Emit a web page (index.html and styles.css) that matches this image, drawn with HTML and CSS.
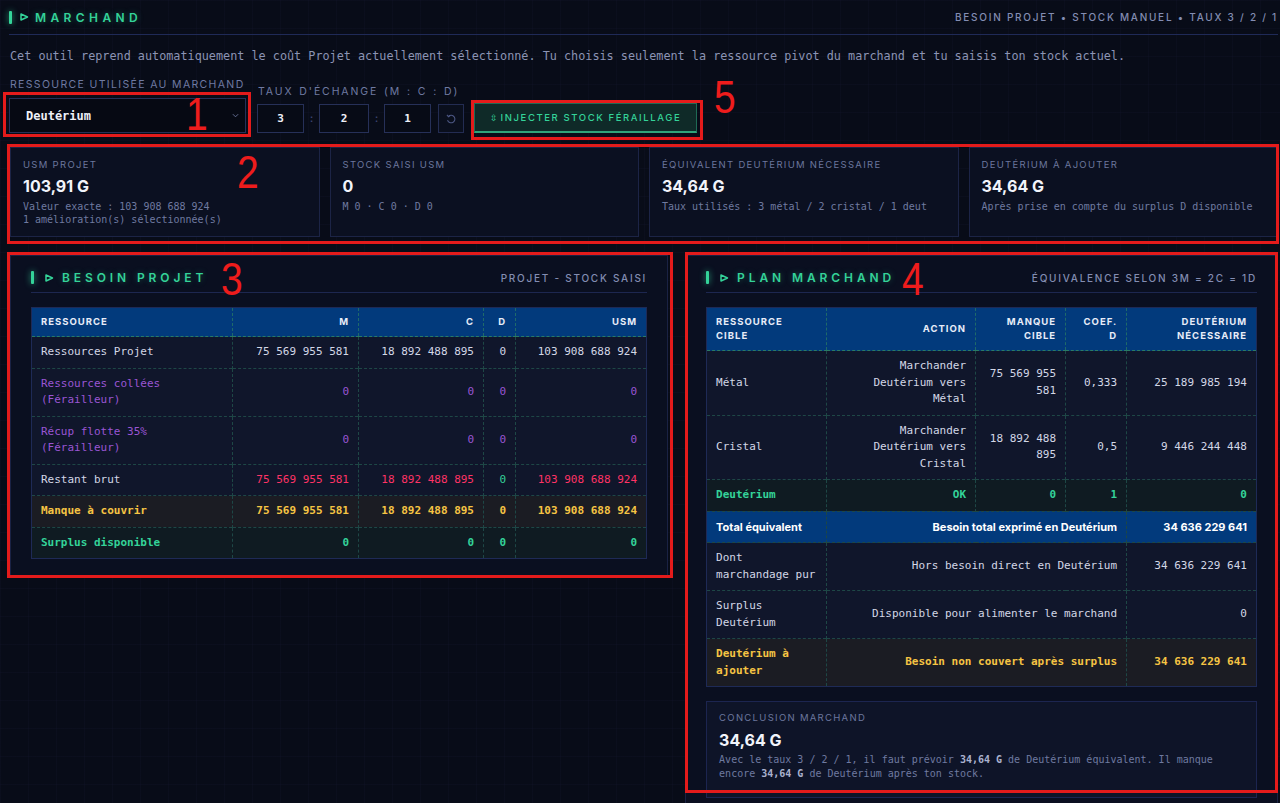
FILE: index.html
```html
<!DOCTYPE html>
<html lang="fr">
<head>
<meta charset="utf-8">
<title>Marchand</title>
<link rel="stylesheet" href="styles.css">
</head>
<body>
<main class="page">
  <header class="sec-head">
    <div class="title main-title">
      <span class="bar"></span>
      <svg class="tri" viewBox="0 0 10 10"><path d="M2 2 L8.5 5 L2 8 Z" fill="none" stroke="currentColor" stroke-width="1.5" stroke-linejoin="round"/></svg>
      <h1>MARCHAND</h1>
    </div>
    <div class="meta">BESOIN PROJET • STOCK MANUEL • TAUX 3 / 2 / 1</div>
  </header>

  <p class="desc">Cet outil reprend automatiquement le coût Projet actuellement sélectionné. Tu choisis seulement la ressource pivot du marchand et tu saisis ton stock actuel.</p>

  <div class="controls">
    <div class="field">
      <div class="lbl">RESSOURCE UTILISÉE AU MARCHAND</div>
      <div class="select">
        <span>Deutérium</span>
        <svg class="chev" viewBox="0 0 8 5"><path d="M1 1 L4 4 L7 1" fill="none" stroke="currentColor" stroke-width="1"/></svg>
      </div>
    </div>
    <div class="field">
      <div class="lbl lbl-taux">TAUX D'ÉCHANGE (M : C : D)</div>
      <div class="rates">
        <div class="num">3</div><span class="colon">:</span>
        <div class="num">2</div><span class="colon">:</span>
        <div class="num">1</div>
        <div class="reset">
          <svg viewBox="0 0 16 16"><path d="M4.6 4.6 A5 5 0 1 1 3.4 9.5" fill="none" stroke="currentColor" stroke-width="1.4"/><path d="M2.6 2.6 L4.6 5 L7 3.4" fill="none" stroke="currentColor" stroke-width="1.4"/></svg>
        </div>
      </div>
    </div>
    <div class="inject"><span class="updown">⇳</span> INJECTER STOCK FÉRAILLAGE</div>
  </div>

  <section class="cards">
    <div class="card">
      <div class="card-lbl">USM PROJET</div>
      <div class="card-val">103,91 G</div>
      <div class="card-sub">Valeur exacte : 103 908 688 924</div>
      <div class="card-sub">1 amélioration(s) sélectionnée(s)</div>
    </div>
    <div class="card">
      <div class="card-lbl">STOCK SAISI USM</div>
      <div class="card-val">0</div>
      <div class="card-sub">M 0 · C 0 · D 0</div>
    </div>
    <div class="card">
      <div class="card-lbl">ÉQUIVALENT DEUTÉRIUM NÉCESSAIRE</div>
      <div class="card-val">34,64 G</div>
      <div class="card-sub">Taux utilisés : 3 métal / 2 cristal / 1 deut</div>
    </div>
    <div class="card">
      <div class="card-lbl">DEUTÉRIUM À AJOUTER</div>
      <div class="card-val">34,64 G</div>
      <div class="card-sub">Après prise en compte du surplus D disponible</div>
    </div>
  </section>

  <section class="panels">
    <div class="panel">
      <header class="panel-head">
        <div class="title">
          <span class="bar"></span>
          <svg class="tri" viewBox="0 0 10 10"><path d="M2 2 L8.5 5 L2 8 Z" fill="none" stroke="currentColor" stroke-width="1.5" stroke-linejoin="round"/></svg>
          <h2>BESOIN PROJET</h2>
        </div>
        <div class="meta">PROJET - STOCK SAISI</div>
      </header>
      <table class="grid besoin">
        <colgroup><col class="b1"><col class="b2"><col class="b3"><col class="b4"><col class="b5"></colgroup>
        <thead>
          <tr><th class="l">RESSOURCE</th><th>M</th><th>C</th><th>D</th><th>USM</th></tr>
        </thead>
        <tbody>
          <tr><td class="l">Ressources Projet</td><td>75 569 955 581</td><td>18 892 488 895</td><td>0</td><td>103 908 688 924</td></tr>
          <tr class="purple"><td class="l">Ressources collées (Férailleur)</td><td>0</td><td>0</td><td>0</td><td>0</td></tr>
          <tr class="purple"><td class="l">Récup flotte 35% (Férailleur)</td><td>0</td><td>0</td><td>0</td><td>0</td></tr>
          <tr><td class="l">Restant brut</td><td class="red">75 569 955 581</td><td class="red">18 892 488 895</td><td class="green">0</td><td class="red">103 908 688 924</td></tr>
          <tr class="warn"><td class="l">Manque à couvrir</td><td>75 569 955 581</td><td>18 892 488 895</td><td>0</td><td>103 908 688 924</td></tr>
          <tr class="ok"><td class="l">Surplus disponible</td><td>0</td><td>0</td><td>0</td><td>0</td></tr>
        </tbody>
      </table>
    </div>

    <div class="panel">
      <header class="panel-head">
        <div class="title">
          <span class="bar"></span>
          <svg class="tri" viewBox="0 0 10 10"><path d="M2 2 L8.5 5 L2 8 Z" fill="none" stroke="currentColor" stroke-width="1.5" stroke-linejoin="round"/></svg>
          <h2>PLAN MARCHAND</h2>
        </div>
        <div class="meta">ÉQUIVALENCE SELON 3M = 2C = 1D</div>
      </header>
      <table class="grid plan">
        <colgroup><col class="p1"><col class="p2"><col class="p3"><col class="p4"><col class="p5"></colgroup>
        <thead>
          <tr><th class="l">RESSOURCE<br>CIBLE</th><th>ACTION</th><th>MANQUE<br>CIBLE</th><th>COEF.<br>D</th><th>DEUTÉRIUM<br>NÉCESSAIRE</th></tr>
        </thead>
        <tbody>
          <tr><td class="l">Métal</td><td>Marchander Deutérium vers Métal</td><td>75 569 955 581</td><td>0,333</td><td>25 189 985 194</td></tr>
          <tr><td class="l">Cristal</td><td>Marchander Deutérium vers Cristal</td><td>18 892 488 895</td><td>0,5</td><td>9 446 244 448</td></tr>
          <tr class="ok"><td class="l">Deutérium</td><td>OK</td><td>0</td><td>1</td><td>0</td></tr>
          <tr class="total"><td class="l">Total équivalent</td><td colspan="3">Besoin total exprimé en Deutérium</td><td>34 636 229 641</td></tr>
          <tr><td class="l">Dont marchandage pur</td><td colspan="3">Hors besoin direct en Deutérium</td><td>34 636 229 641</td></tr>
          <tr><td class="l">Surplus Deutérium</td><td colspan="3">Disponible pour alimenter le marchand</td><td>0</td></tr>
          <tr class="warn"><td class="l">Deutérium à ajouter</td><td colspan="3">Besoin non couvert après surplus</td><td>34 636 229 641</td></tr>
        </tbody>
      </table>
      <div class="conclusion">
        <div class="card-lbl">CONCLUSION MARCHAND</div>
        <div class="card-val">34,64 G</div>
        <div class="concl-text">
          <div class="concl-line"><span>Avec le taux 3 / 2 / 1, il faut prévoir </span><b>34,64 G</b><span> de Deutérium équivalent. Il manque</span></div>
          <div class="concl-line"><span>encore </span><b>34,64 G</b><span> de Deutérium après ton stock.</span></div>
        </div>
      </div>
    </div>
  </section>
</main>

<div class="annot">
  <div class="rbox rb1"></div>
  <div class="rbox rb2"></div>
  <div class="rbox rb3"></div>
  <div class="rbox rb4"></div>
  <div class="rbox rb5"></div>
  <span class="rnum n1">1</span>
  <span class="rnum n2">2</span>
  <span class="rnum n3">3</span>
  <span class="rnum n4">4</span>
  <span class="rnum n5">5</span>
</div>
</body>
</html>
```

FILE: styles.css
```css
* { box-sizing: border-box; margin: 0; padding: 0; }

html, body { height: 100%; overflow: hidden; }

body {
  position: relative;
  background-color: #080c18;
  background-image:
    linear-gradient(rgba(70, 90, 150, 0.045) 1px, transparent 1px),
    linear-gradient(90deg, rgba(70, 90, 150, 0.045) 1px, transparent 1px);
  background-size: 28px 28px;
  color: #cfd4e6;
  font-family: "DejaVu Sans Mono", "Liberation Mono", monospace;
}

.page { padding: 0 2px 0 9px; }

/* ---------- header ---------- */
.sec-head {
  display: flex;
  justify-content: space-between;
  align-items: center;
  height: 35px;
  border-bottom: 1px solid #1f2a57;
}

.title { display: flex; align-items: center; }
.bar {
  width: 3px;
  height: 13px;
  background: #34d399;
  border-radius: 1px;
  box-shadow: 0 0 6px rgba(52, 211, 153, 0.75);
}
.tri { width: 10px; height: 10px; color: #34d399; margin: 0 8px 0 10px; }
.main-title .tri { margin: 0 6px 0 7px; }

.title h1, .title h2 {
  font-family: Inter, "DejaVu Sans", sans-serif;
  font-weight: 600;
  font-size: 12px;
  color: #34d399;
  text-shadow: 0 0 6px rgba(52, 211, 153, 0.35);
}
.title h1 { letter-spacing: 4.4px; }
.title h2 { letter-spacing: 3.9px; }

.meta {
  font-family: Inter, "DejaVu Sans", sans-serif;
  font-size: 10px;
  font-weight: 500;
  letter-spacing: 1.75px;
  color: #838db2;
}

.desc {
  margin-top: 13px;
  font-size: 11.8px;
  line-height: 16px;
  color: #8c94b4;
  padding-left: 1px;
}

/* ---------- controls ---------- */
.controls {
  display: flex;
  align-items: flex-end;
  gap: 11px;
  margin-top: 15px;
}
.field { display: flex; flex-direction: column; }
.lbl {
  font-family: Inter, "DejaVu Sans", sans-serif;
  font-size: 10.5px;
  line-height: 12px;
  letter-spacing: 1.35px;
  color: #6f7aa2;
  margin-bottom: 6px;
  padding-left: 1px;
  white-space: nowrap;
}
.lbl-taux { letter-spacing: 1.9px; word-spacing: 1px; }
.field:first-child .lbl { margin-bottom: 7px; }

.select {
  width: 237px;
  height: 35px;
  display: flex;
  align-items: center;
  justify-content: space-between;
  padding: 0 6px 0 16px;
  background: #060913;
  border: 1px solid #263058;
  font-size: 12px;
  font-weight: bold;
  color: #eef0f8;
}
.chev { width: 7px; height: 5px; color: #6f7aa2; }

.rates { display: flex; align-items: center; }
.num {
  width: 47px;
  height: 29px;
  display: flex;
  align-items: center;
  justify-content: center;
  background: #070b16;
  border: 1px solid #263058;
  font-size: 11px;
  font-weight: bold;
  color: #eef0f8;
}
.colon {
  width: 15px;
  text-align: center;
  font-size: 11px;
  color: #3d4670;
}
.rates .num:nth-child(3) { width: 50px; }
.reset {
  width: 26px;
  height: 29px;
  margin-left: 7px;
  display: flex;
  align-items: center;
  justify-content: center;
  background: #0a0f1d;
  border: 1px solid #232c52;
  color: #4d5885;
}
.reset svg { width: 12px; height: 12px; }

.inject {
  height: 30px;
  margin-left: -1px;
  padding: 0 15px;
  display: flex;
  align-items: center;
  background: #0f2a28;
  border: 1px solid #1f6b55;
  border-bottom: 2px solid #2fa37a;
  font-family: Inter, "DejaVu Sans", sans-serif;
  font-size: 9.5px;
  font-weight: 500;
  letter-spacing: 1.6px;
  color: #34d399;
}
.updown { margin-right: 3px; font-family: "DejaVu Sans", sans-serif; font-size: 9px; letter-spacing: 0; }

/* ---------- cards ---------- */
.cards {
  display: grid;
  grid-template-columns: repeat(4, 1fr);
  gap: 10px;
  margin-top: 14px;
  padding-left: 1px;
}
.card {
  height: 90px;
  padding: 12px 12px;
  background: #0b1021;
  border: 1px solid #1c2446;
}
.card-lbl {
  font-family: Inter, "DejaVu Sans", sans-serif;
  font-size: 9.5px;
  line-height: 10px;
  letter-spacing: 1.3px;
  color: #6c779e;
}
.card-val {
  margin-top: 6px;
  font-family: Inter, "DejaVu Sans", sans-serif;
  font-size: 16px;
  font-weight: 700;
  line-height: 20px;
  color: #f2f4fb;
}
.card-sub {
  font-size: 10px;
  line-height: 13px;
  color: #6f7aa0;
}
.card-val + .card-sub { margin-top: 4px; }

/* ---------- panels ---------- */
.panels {
  display: grid;
  grid-template-columns: 1.11fr 1fr;
  gap: 17px;
  align-items: start;
  margin-top: 18px;
  padding-left: 1px;
}
.panel {
  background: #0a0f20;
  border: 1px solid #1a2244;
  padding: 7px 20px 16px;
}
.panel-head {
  height: 30px;
  display: flex;
  justify-content: space-between;
  align-items: center;
  border-bottom: 1px solid #1d2750;
}

.grid {
  width: 100%;
  margin-top: 14px;
  table-layout: fixed;
  border-collapse: collapse;
  border: 1px solid #1e2a56;
  font-size: 11px;
}
.besoin .b1 { width: 201px; }
.besoin .b2 { width: 126px; }
.besoin .b3 { width: 125px; }
.besoin .b4 { width: 32px; }
.plan .p1 { width: 120px; }
.plan .p2 { width: 149px; }
.plan .p3 { width: 90px; }
.plan .p4 { width: 61px; }

.grid th {
  background: #023a7c;
  font-family: Inter, "DejaVu Sans", sans-serif;
  font-size: 9.5px;
  font-weight: 700;
  letter-spacing: 1px;
  line-height: 14px;
  color: #e8ecf8;
  text-align: right;
  padding: 7px 9px 7px 9px;
  border-left: 1px dashed #1f6a6a;
  border-bottom: 1px dashed #2a7a64;
  vertical-align: middle;
}
.grid td {
  background: #10162b;
  padding: 7px 9px;
  line-height: 16.5px;
  text-align: right;
  vertical-align: middle;
  color: #d3d7e6;
  border-left: 1px dashed #1e4746;
  border-top: 1px dashed #1e4746;
}
.grid .l { text-align: left; border-left: none; }

.purple td { color: #9a55d4; }
.red { color: #ff3366 !important; }
.green { color: #34d399 !important; }
.warn td { background: #1b1c23; color: #f6c443; font-weight: bold; }
.ok td { background: #0f1b22; color: #34d399; font-weight: bold; }
.total td {
  background: #023a7c;
  color: #ffffff;
  font-family: Inter, "DejaVu Sans", sans-serif;
  font-weight: 700;
  font-size: 11px;
  white-space: nowrap;
}

.conclusion {
  margin-top: 14px;
  padding: 11px 12px 16px;
  background: #0e1428;
  border: 1px solid #1c2550;
}
.conclusion .card-val { margin-top: 7px; }
.concl-text {
  margin-top: 3px;
  font-size: 10px;
  line-height: 14px;
  color: #6f7aa0;
}
.concl-line { white-space: pre; }
.concl-text b { color: #aab2cf; font-weight: bold; }

/* ---------- annotations ---------- */
.annot { position: absolute; inset: 0; pointer-events: none; }
.rbox { position: absolute; border: 3px solid #e41b1b; }
.rb1 { left: 3px; top: 92px; width: 248px; height: 45px; }
.rb2 { left: 7px; top: 144px; width: 1272px; height: 100px; }
.rb3 { left: 7px; top: 252px; width: 666px; height: 326px; }
.rb4 { left: 685px; top: 252px; width: 593px; height: 541px; }
.rb5 { left: 471px; top: 100px; width: 232px; height: 40px; }
.rnum {
  position: absolute;
  font-family: "Liberation Sans", Arial, sans-serif;
  font-size: 46px;
  line-height: 46px;
  color: #ee1c1c;
  transform: scaleX(0.85);
  transform-origin: left top;
}
.n1 { left: 186px; top: 91px; }
.n2 { left: 237px; top: 149px; }
.n3 { left: 221px; top: 256px; }
.n4 { left: 902px; top: 256px; }
.n5 { left: 714px; top: 74px; }
```
